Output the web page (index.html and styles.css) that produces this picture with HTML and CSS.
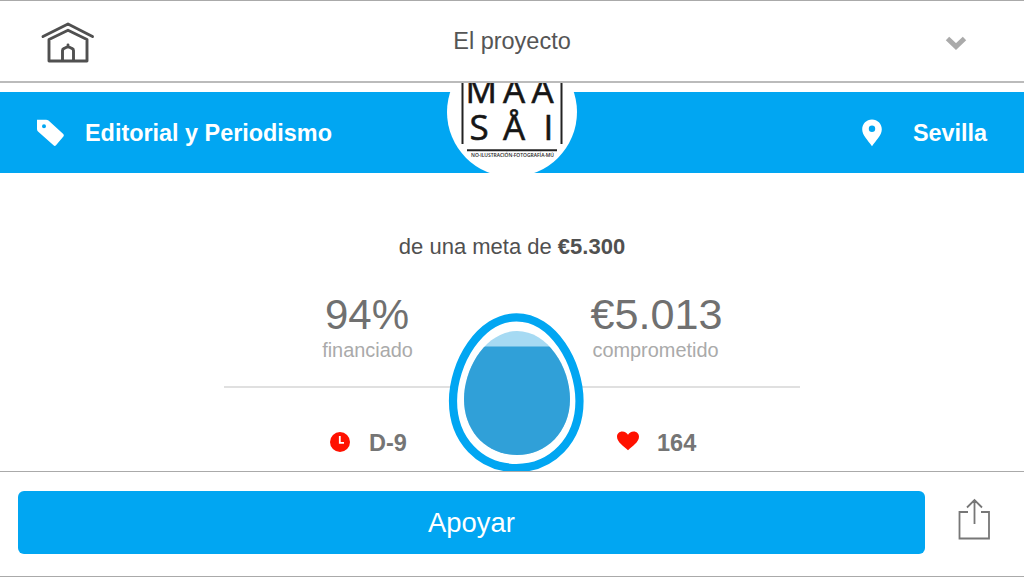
FILE: index.html
```html
<!doctype html>
<html lang="es">
<head>
<meta charset="utf-8">
<meta name="viewport" content="width=device-width,initial-scale=1">
<title>El proyecto</title>
<link rel="stylesheet" href="styles.css">
</head>
<body>
<header class="topbar">
  <svg class="home" viewBox="0 0 56 44" width="56" height="44">
    <path d="M3 15.5 28 3 52.5 15.5M9 18.500V40H47V18.500L28 9.200ZM22.500 40V29.500Q22.500 28 24 27.500L28 25.500 32 27.500Q33.500 28 33.500 29.500V40M28 26V24"/>
  </svg>
  <h1>El proyecto</h1>
  <svg class="chevron" viewBox="0 0 24 16" width="24" height="16"><path d="M3.500 3.500 12 11.500 20.500 3.500"/></svg>
</header>

<main>
  <section class="band">
    <div class="category">
      <svg viewBox="0 0 28 28" width="28" height="28"><path fill-rule="evenodd" d="M1 .7H10Q11.500 .7 12.500 1.600L27 14.800Q28.400 16.200 27.400 17.600L20 26.300Q18.800 27.600 17.500 26.300L2 12.500Q1 11.500 1 10ZM8 5.300a2 2 0 1 0 0 4 2 2 0 0 0 0-4Z"/></svg>
      <span>Editorial y Periodismo</span>
    </div>
    <div class="place">
      <svg viewBox="0 0 20 28" width="20" height="28"><path fill-rule="evenodd" d="M10 .5C4.5.5.2 4.8.2 10.2.2 16.5 6 21 10 27.3 14 21 19.8 16.5 19.8 10.2 19.8 4.8 15.5.5 10 .5ZM10 6.6a3.2 3.2 0 1 1 0 6.4 3.2 3.2 0 0 1 0-6.4Z"/></svg>
      <span>Sevilla</span>
    </div>
    <svg class="avatar" viewBox="0 0 130 130" width="130" height="130">
      <circle cx="65" cy="65" r="65" fill="#fff"/>
      <path d="M15.5 20V97M114.500 20V97" stroke="#222" stroke-width="2"/>
      <path d="M20 103.3H110" stroke="#222" stroke-width="2"/>
      <g class="letters">
        <text x="18.500" y="56">M</text>
        <text x="56" y="56">A</text>
        <text x="84.500" y="56">A</text>
        <text x="22.500" y="93">S</text>
        <text x="56" y="93">Å</text>
        <text x="96.500" y="93">I</text>
      </g>
      <text class="tiny" x="24" y="109.500" textLength="83" lengthAdjust="spacingAndGlyphs">NO·ILUSTRACIÓN·FOTOGRAFÍA·MÚ</text>
    </svg>
  </section>

  <p class="goal">de una meta de <b>€5.300</b></p>

  <section class="stats">
    <div class="row totals">
      <div class="stat"><strong>94%</strong><small>financiado</small></div>
      <div class="stat"><strong class="amount">€5.013</strong><small>comprometido</small></div>
    </div>
    <div class="row counts">
      <div class="count">
        <svg viewBox="0 0 22 22" width="22" height="22"><circle cx="11" cy="11" r="10" fill="#f10"/><path d="M10.800 5V11.800H15" fill="none" stroke="#fff" stroke-width="1.800"/></svg>
        <b>D-9</b>
      </div>
      <div class="count likes">
        <svg viewBox="0 0 22 20" width="22" height="20"><path fill="#f10" d="M11 19.200C7 15.500 0 11 0 5.700 0 2.600 2.300.500 5.300.500 8 .500 9.800 1.800 11 3.800 12.200 1.800 14 .500 16.700.500 19.700.500 22 2.600 22 5.700 22 11 15 15.500 11 19.200Z"/></svg>
        <b>164</b>
      </div>
    </div>
    <svg class="egg" viewBox="0 0 136 160" width="136" height="160">
      <path class="shell" d="M68.500 4.300C105 4.300 131.500 50 131.500 88 131.500 127 104 155 68.500 155 32 155 5 127 5 88 5 50 32 4.300 68.500 4.300Z"/>
      <clipPath id="yolk"><path d="M69 18C100 18 122 55 122 86 122 119 98 142 69 142 39 142 16 119 16 86 16 55 38 18 69 18Z"/></clipPath>
      <g clip-path="url(#yolk)">
        <rect width="136" height="160" fill="#a6daf3"/>
        <rect y="33.500" width="136" height="127" fill="#30a0d8"/>
      </g>
    </svg>
  </section>
</main>

<footer class="actions">
  <button>Apoyar</button>
  <svg class="share" viewBox="0 0 34 44" width="34" height="44"><path d="M11 15H2.500V41.500H32V15H24M17.500 27V3M10 10.500 17.500 3 25 10.500"/></svg>
</footer>
</body>
</html>
```
FILE: styles.css
```css
*{box-sizing:border-box}
body{margin:0;height:577px;display:flex;flex-direction:column;overflow:hidden;background:#fff;color:#555;font-family:"Liberation Sans",Arial,sans-serif}
svg{display:block;flex:none}
.topbar{height:83px;flex:none;display:grid;grid-template-columns:1fr auto 1fr;align-items:center;padding:0 56px 0 40px;border-top:1px solid #aaa;border-bottom:2px solid #bbb}
.topbar h1{margin:0 0 0 16px;font-size:23.5px;font-weight:400;line-height:28px}
.home{fill:none;stroke:#505050;stroke-width:2.9;stroke-linecap:round;stroke-linejoin:round;margin-top:4px}
.chevron{justify-self:end;fill:none;stroke:#aaa;stroke-width:5;margin-top:3px}
main{flex:1;min-height:0;overflow:hidden;padding-top:9px}

.band{position:relative;height:81px;background:#01a6f2;color:#fff;font-size:23.4px;font-weight:700;display:flex;align-items:center;justify-content:space-between;padding:1px 37px 0 36px}
.band svg{fill:#fff}
.category,.place{display:flex;align-items:center}
.category{gap:21px}
.place{gap:31px}
.avatar{position:absolute;left:447px;top:-45px}
.letters{fill:#151515;stroke:#151515;stroke-width:.6;font:35px "Open Sans",sans-serif}
.tiny{fill:#222;font:600 5px "Open Sans",sans-serif}

.goal{margin:61px 0 0;text-align:center;font-size:22px;line-height:26px;color:#505050}
.stats{position:relative;width:576px;margin:0 auto}
.row{display:grid;grid-template-columns:1fr 1fr}
.totals{height:128px;padding-top:31px;border-bottom:2px solid #e0e0e0}
.stat{display:flex;flex-direction:column;align-items:center}
.stat strong{font-size:42px;font-weight:400;line-height:48px;color:#707070;margin-left:-2px}
.stat .amount{font-size:43.2px;margin-left:1px;position:relative;top:-1px}
.stat small{font-size:19.9px;line-height:24px;color:#aaa;margin-top:-1px;margin-left:-1px}
.counts{padding-top:41px}
.count{display:flex;align-items:center;gap:18px;font-size:23.5px;line-height:28px;color:#757575}
.count:first-child{padding-left:105px}
.count svg{margin-top:-2px}
.likes svg{margin-top:-4px}
.egg{position:absolute;left:224px;top:53px}
.shell{fill:#fff;stroke:#01a6f2;stroke-width:8.2}
.likes{padding-left:105px}

.actions{height:106px;flex:none;display:flex;align-items:center;border-top:1px solid #aaa;border-bottom:1px solid #aaa;padding:0 33px 0 18px;gap:32px}
.actions button{width:907px;height:63px;margin-bottom:4px;padding:2px 0 0;border:0;border-radius:6px;background:#01a6f2;color:#fff;font:27.4px "Liberation Sans",Arial,sans-serif}
.share{fill:none;stroke:#777;stroke-width:1.8;margin-bottom:11px}
```
